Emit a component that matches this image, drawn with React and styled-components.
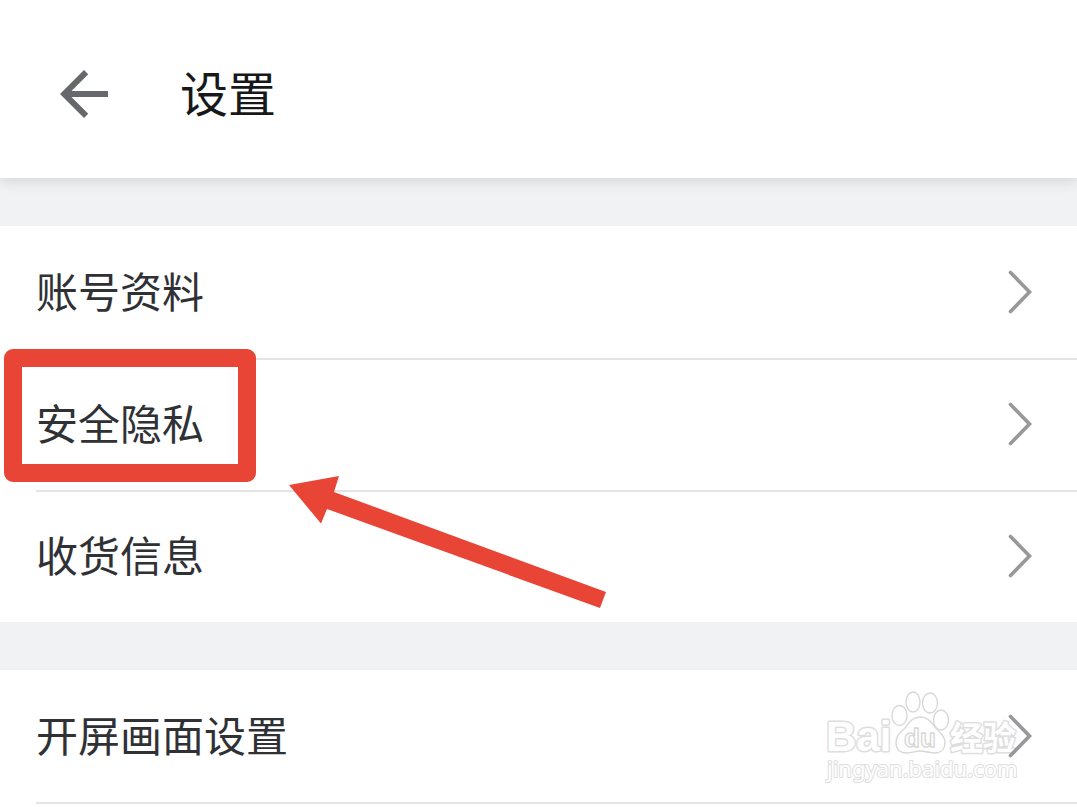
import React from 'react';
import styled, { createGlobalStyle } from 'styled-components';

const GlobalStyle = createGlobalStyle`
  body {
    margin: 0;
    background: #f1f2f4;
    font-family: "Noto Sans CJK SC", "Liberation Sans", sans-serif;
  }
`;

const Page = styled.div`
  display: flex;
  flex-direction: column;
  gap: 48px;
  min-height: 100vh;
  overflow: hidden;
`;

const Header = styled.header`
  display: flex;
  align-items: center;
  gap: 60px;
  padding: 58px 48px 48px;
  background: #fff;
  box-shadow: 0 2px 14px rgba(0, 0, 0, 0.14);
`;

const BackButton = styled.button`
  display: flex;
  padding: 0;
  border: 0;
  background: none;
  cursor: pointer;
`;

const Title = styled.h1`
  margin: 0;
  padding-bottom: 6px;
  font-size: 48px;
  font-weight: 400;
  line-height: 60px;
  color: #17181a;
`;

const Group = styled.ul`
  margin: 0;
  padding: 0;
  list-style: none;
  background: #fff;

  &:last-child {
    flex: 1;
  }
`;

const Item = styled.li`
  position: relative;
  margin-left: 36px;
  border-top: 2px solid ${({ $divided }) => ($divided ? '#e4e4e5' : 'transparent')};
`;

const RowLink = styled.a`
  display: flex;
  align-items: center;
  justify-content: space-between;
  min-height: 128px;
  padding: 0 44px 2px 0;
  text-decoration: none;
`;

const Label = styled.span`
  padding-bottom: 4px;
  font-size: 42px;
  line-height: 60px;
  color: #303135;
`;

const Divider = styled.li`
  height: 2px;
  margin-left: 36px;
  background: #e4e4e5;
`;

const Highlight = styled.span`
  position: absolute;
  top: -11px;
  left: -32px;
  box-sizing: border-box;
  width: 252px;
  height: 133px;
  border: 18px solid #e94537;
  border-radius: 9px;
  pointer-events: none;
`;

const Pointer = styled.svg`
  position: absolute;
  top: 112px;
  left: 252px;
  z-index: 1;
  pointer-events: none;
`;

const Watermark = styled.svg`
  position: absolute;
  top: 14px;
  right: 52px;
  pointer-events: none;
`;

const Chevron = styled.svg`
  position: relative;
  z-index: 1;
`;

const BackIcon = () => (
  <svg width="72" height="72" viewBox="0 0 24 24" fill="#67686c" aria-hidden="true">
    <path d="M20 11H7.83l5.59-5.59L12 4l-8 8 8 8 1.41-1.41L7.83 13H20v-2z" />
  </svg>
);

const ChevronIcon = () => (
  <Chevron width="26" height="46" viewBox="0 0 26 46" fill="none" aria-hidden="true">
    <path d="M3.5 3.5L22.5 23L3.5 42.5" stroke="#98989a" strokeWidth="3.6" strokeLinecap="round" />
  </Chevron>
);

const ArrowMark = () => (
  <Pointer width="320" height="136" viewBox="0 0 320 136" aria-hidden="true">
    <path d="M1 13L51 4L46 20L318 120L312 136L39 37L33 51.5Z" fill="#e94537" />
  </Pointer>
);

// Outlined logo: wordmark, paw and site address
const BaiduMark = () => (
  <Watermark width="200" height="100" viewBox="0 0 200 100" fill="#fff" stroke="#dedede">
    <g strokeWidth="3" paintOrder="stroke" strokeLinejoin="round">
      <text x="1" y="65" fontFamily="Liberation Sans, sans-serif" fontSize="42" fontWeight="700">Bai</text>
      <text x="125" y="64" fontFamily="Noto Sans CJK SC, sans-serif" fontSize="33" fontWeight="700">经验</text>
      <text x="2" y="91" fontFamily="Noto Sans, sans-serif" fontSize="22" strokeWidth="2">jingyan.baidu.com</text>
    </g>
    <g strokeWidth="1.4" stroke="#d8d8d8">
      <ellipse cx="74.500" cy="29.500" rx="7.500" ry="10" />
      <ellipse cx="88" cy="16" rx="7" ry="10" />
      <ellipse cx="105" cy="17" rx="7.500" ry="10" />
      <ellipse cx="116" cy="34" rx="7.500" ry="10" />
      <path d="M95 31C87 31 84 37 80 42C76 46 71 49 71 57C71 64 76 67 82 67C87 67 91 65 95 65C100 65 105 67 110 67C116 67 120 63 120 56C120 49 113 46 110 41C106 36 103 31 95 31Z" />
      <text x="79" y="61" fontFamily="Liberation Sans, sans-serif" fontSize="26" fontWeight="700">du</text>
    </g>
  </Watermark>
);

const groups = [
  [
    { label: '账号资料' },
    { label: '安全隐私', highlighted: true },
    { label: '收货信息' },
  ],
  [{ label: '开屏画面设置', branded: true }],
];

const App = () => (
  <Page>
    <GlobalStyle />
    <Header>
      <BackButton type="button" aria-label="返回">
        <BackIcon />
      </BackButton>
      <Title>设置</Title>
    </Header>
    {groups.map((items, index) => (
      <Group key={index}>
        {items.map((item, i) => (
          <Item key={item.label} $divided={i > 0}>
            <RowLink href="#">
              <Label>{item.label}</Label>
              <ChevronIcon />
            </RowLink>
            {item.highlighted && <Highlight />}
            {item.highlighted && <ArrowMark />}
            {item.branded && <BaiduMark />}
          </Item>
        ))}
        {index === groups.length - 1 && <Divider role="presentation" />}
      </Group>
    ))}
  </Page>
);

export default App;
